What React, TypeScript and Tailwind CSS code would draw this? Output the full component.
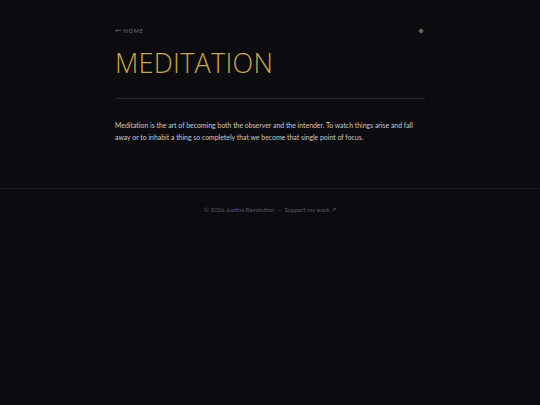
export default function App() {
  return (
    <div className="min-h-[405px] bg-[#0c0c10] font-['Lato',sans-serif]">
      <main className="mx-auto w-[310px] pt-[26px] pb-[44px]">
        <div className="flex items-center justify-between">
          <a className="flex items-center gap-[2px] text-[5.5px] font-bold uppercase tracking-[0.14em] text-[#5c5c62]">
            <span className="text-[6.5px] tracking-normal">←</span>
            <span>Home</span>
          </a>
          <span className="flex h-[8px] w-[8px] items-center justify-center">
            <span className="h-[4px] w-[4px] rotate-45 bg-[#6a6752]" />
          </span>
        </div>
        <h1 className="mt-[11px] font-['Open_Sans',sans-serif] text-[27px] font-light uppercase leading-[32px] tracking-[0.01em] text-[#c8a653]">
          Meditation
        </h1>
        <div className="mt-[19px] h-px bg-[#2a2a2e]" />
        <p className="mt-[20px] text-[6.9px] leading-[12.5px] text-[#c9c9cc]">
          Meditation is the art of becoming both the observer and the intender. To watch things arise and fall
          away or to inhabit a thing so completely that we become that single point of focus.
        </p>
      </main>
      <footer className="border-t border-[#17171b] pt-[16px] text-center text-[6px] text-[#5a5a60]">
        © 2026 Justina Revolution <span className="mx-[3px]">·</span> Support my work ↗
      </footer>
    </div>
  );
}
